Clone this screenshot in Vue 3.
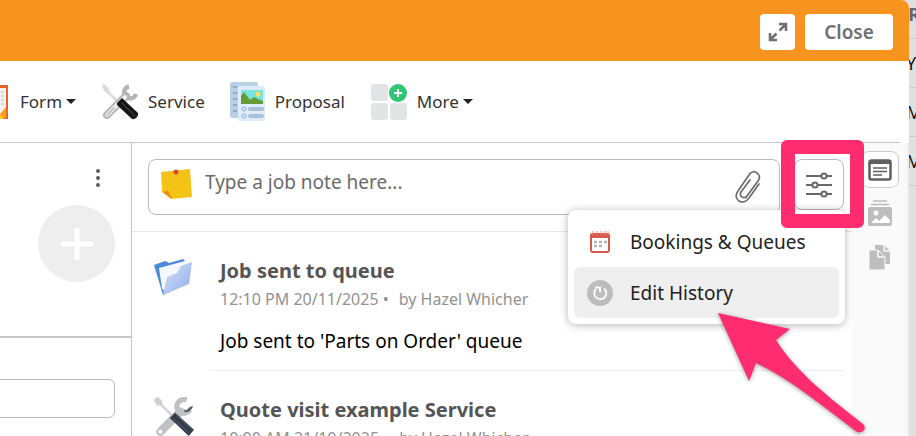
<template>
  <div class="page">
    <section class="dialog">
      <header class="dialog-header">
        <button class="header-btn expand" type="button" aria-label="Expand">
          <svg width="20" height="20" viewBox="0 0 20 20" fill="none" stroke="#707070" stroke-width="2.6">
            <path d="M11.500 8.500L17.500 2.500M11 2H18V9M8.500 11.500l-6 6M9 18H2V11" />
          </svg>
        </button>
        <button class="header-btn close" type="button">Close</button>
      </header>

      <nav class="toolbar">
        <button class="tool form-tool" type="button">
          <svg width="11" height="36" viewBox="0 0 11 36">
            <path d="M0 1h8v34H0z" fill="#e5622a" />
            <path d="M0 4h6v20l-6 7z" fill="#f2f2f2" />
            <path d="M1 8h3M1 12h3M1 16h3M1 20h3" stroke="#b9b9b9" />
            <path d="M6 23v11H0v-4z" fill="#f9a01b" />
            <path d="M0 30l4 5H0z" fill="#ffc928" />
          </svg>
          <span>Form<i class="caret"></i></span>
        </button>
        <button class="tool service-tool" type="button">
          <svg width="38" height="38" viewBox="0 0 38 38">
            <path d="M2 1l3 1 3 4 1 3 11 11-2 2L7 11 4 9 1 4z" fill="#dcdcdc" />
            <path d="M28 3.500A6 6 0 1 0 35 11" fill="none" stroke="#b4b4b4" stroke-width="4.500" />
            <path d="M25 13L6 32" stroke="#b4b4b4" stroke-width="8" stroke-linecap="round" />
            <path d="M24 14L6 32" stroke="#f0f0f0" stroke-width="4" stroke-linecap="round" />
            <path d="M13 25l-7 7" stroke="#c4c4c4" stroke-width="2" stroke-linecap="round" />
            <path d="M16 20l5-5 16 15c1 3-3 7-6 6L16 22z" fill="#161616" />
            <path d="M21 20l13 13" stroke="#4a4a4a" stroke-width="1" />
          </svg>
          <span>Service</span>
        </button>
        <button class="tool proposal-tool" type="button">
          <svg width="36" height="40" viewBox="0 0 36 40">
            <rect width="28" height="36" rx="2" fill="#b8d0e6" />
            <path d="M3 5h4M3 11h4M3 17h4M3 23h4M3 29h4" stroke="#91abc3" stroke-width="2" />
            <rect x="8" y="4" width="27" height="35" rx="2" fill="#dcecfb" />
            <rect x="11" y="8" width="22" height="14" fill="#78e3df" />
            <circle cx="28" cy="12" r="2.500" fill="#f6df63" />
            <path d="M11 22v-8l3-4 6 8 4-3 4 2 5 2v3z" fill="#679b36" />
            <circle cx="14" cy="27" r="2" fill="none" stroke="#91abc3" />
            <circle cx="14" cy="34" r="2" fill="none" stroke="#91abc3" />
            <path d="M20 27h12M20 34h12" stroke="#a8c1d7" stroke-width="4" stroke-linecap="round" />
          </svg>
          <span>Proposal</span>
        </button>
        <button class="tool more-tool" type="button">
          <svg width="38" height="38" viewBox="0 0 38 38">
            <g fill="#e3e4e6">
              <rect x="1" y="1" width="17" height="17" rx="3" />
              <rect x="1" y="20" width="17" height="17" rx="3" />
              <rect x="20" y="20" width="17" height="17" rx="3" />
            </g>
            <circle cx="28" cy="10" r="9" fill="#2fc574" />
            <path d="M28 6v8M24 10h8" stroke="#fff" stroke-width="2" />
          </svg>
          <span>More<i class="caret"></i></span>
        </button>
      </nav>

      <div class="workspace">
        <aside class="left-pane">
          <div class="contacts">
            <button class="kebab" type="button" aria-label="Options">
              <svg width="6" height="20" viewBox="0 0 6 20" fill="#5c5c5c">
                <circle cx="3" cy="3" r="2" />
                <circle cx="3" cy="10" r="2" />
                <circle cx="3" cy="17" r="2" />
              </svg>
            </button>
            <button class="add-btn" type="button" aria-label="Add">
              <svg width="32" height="32" viewBox="0 0 32 32">
                <path d="M16 2v28M2 16h28" stroke="#fff" stroke-width="5" stroke-linecap="round" />
              </svg>
            </button>
          </div>
          <input v-model="detail" class="detail-input" type="text" aria-label="Detail" />
        </aside>

        <main class="diary">
          <div class="note-bar">
            <div class="note-box">
              <svg width="34" height="32" viewBox="0 0 34 32">
                <path d="M1 3L30 0l2 28-21 2-9-7z" fill="#f5c315" />
                <path d="M3 23c2 0 4-1 5-2l4 9z" fill="#e98d12" />
                <circle cx="16" cy="3" r="2.500" fill="#dc4a35" />
              </svg>
              <input v-model="note" type="text" placeholder="Type a job note here..." aria-label="Job note" />
              <button class="attach" type="button" aria-label="Attach file">
                <svg width="26" height="34" viewBox="0 0 26 34" fill="none" stroke="#6c6c6c" stroke-width="1.700" stroke-linecap="round">
                  <path d="M24 14L14 28c-3 4-7 5-10 3s-4-6-1-10L14 5c2-4 6-4 8-2 3 2 3 5 1 8L12 26c-1 2-3 2-5 1s-2-3-1-5l9-12" />
                </svg>
              </button>
            </div>
            <div class="filter">
              <button class="filter-btn" type="button" aria-label="Filter">
                <svg width="28" height="26" viewBox="0 0 28 26" fill="#fff" stroke="#686868" stroke-width="2">
                  <path d="M1 4h26M1 13h26M1 22h26" />
                  <circle cx="19" cy="4" r="2.600" />
                  <circle cx="10" cy="13" r="2.600" />
                  <circle cx="19" cy="22" r="2.600" />
                </svg>
              </button>
              <div class="menu">
                <button class="menu-item" type="button">
                  <svg width="26" height="26" viewBox="0 0 26 26">
                    <rect x="4" y="5" width="18" height="18" rx="2" fill="#fff" stroke="#d9584d" stroke-width="2" />
                    <path d="M3 5h20v4H3z" fill="#d9584d" />
                    <path d="M6 2v4M10 2v4M14 2v4M18 2v4M21 2v4" stroke="#e58a82" />
                    <path d="M7 13h13M7 17h8" stroke="#b5b5b5" stroke-width="2.500" stroke-dasharray="3 2" />
                  </svg>
                  <span>Bookings &amp; Queues</span>
                </button>
                <button class="menu-item active" type="button">
                  <svg width="26" height="26" viewBox="0 0 26 26">
                    <circle cx="13" cy="13" r="13" fill="#bdbdbd" />
                    <path d="M17 8.500a6 6 0 1 1-8 0.500" fill="none" stroke="#fff" stroke-width="1.800" />
                    <path d="M8 7.500h5v5" fill="none" stroke="#fff" stroke-width="1.800" />
                  </svg>
                  <span>Edit History</span>
                </button>
              </div>
              <div class="highlight"></div>
              <svg class="arrow" width="156" height="130" viewBox="0 0 156 130">
                <path d="M4 4L76 20 62 31C82 63 117 90 149 115q3 3 1 6t-7 2C110 98 76 70 42 54L35 72z" fill="#ff2d6f" />
              </svg>
            </div>
          </div>

          <ul class="feed">
            <li v-for="entry in entries" :key="entry.title" class="entry">
              <svg v-if="entry.icon === 'folder'" width="40" height="40" viewBox="0 0 40 40">
                <defs>
                  <linearGradient id="folder-front" x1="0" y1="0" x2="1" y2="1">
                    <stop offset="0" stop-color="#d7e4fb" />
                    <stop offset="1" stop-color="#8eaae7" />
                  </linearGradient>
                </defs>
                <path d="M0 7l11-4 4 2 14-4 3 3-16 30-7 3z" fill="#4c8bdb" />
                <path d="M5 10L31 3l5 3-24 30-4-6z" fill="#f4f8ff" />
                <path d="M9 37L13 19l10-4 4-7 11-4-3 22z" fill="url(#folder-front)" />
              </svg>
              <svg v-else width="40" height="40" viewBox="0 0 38 38">
                <path d="M1 1l3-1 4 4v3l11 11-1 2L6 8H3L0 4z" fill="#cdd1da" />
                <path d="M31 3A6.500 6.500 0 1 0 34 12" fill="none" stroke="#bfc1c4" stroke-width="5" />
                <path d="M29 14.500c4 0 7-2 8-6l-3 1-3 3-4-1z" fill="#555b63" />
                <path d="M25 14L6 33" stroke="#bfc1c4" stroke-width="8" stroke-linecap="round" />
                <circle cx="6" cy="33" r="2" fill="#fff" />
                <path d="M15 20l5-5 18 16-5 6z" fill="#343d49" />
                <path d="M18 20l15 14M21 17l15 14" stroke="#4c5663" />
              </svg>
              <div class="entry-body">
                <h3>{{ entry.title }}</h3>
                <p class="meta">
                  <span>{{ entry.time }} •</span>
                  <span>by {{ entry.author }}</span>
                </p>
                <p class="text">{{ entry.text }}</p>
              </div>
            </li>
          </ul>
        </main>

        <aside class="side-tabs">
          <button class="side-tab active" type="button" aria-label="Diary">
            <svg width="24" height="22" viewBox="0 0 24 22">
              <rect x="1.500" y="1.500" width="21" height="19" rx="2" fill="#fff" stroke="#5f5f5f" stroke-width="2.500" />
              <path d="M1 2h22v3H1z" fill="#5f5f5f" />
              <path d="M5 9h14M5 12.500h14M5 16h9" stroke="#5f5f5f" stroke-width="1.500" />
            </svg>
          </button>
          <button class="side-tab" type="button" aria-label="Photos">
            <svg width="24" height="26" viewBox="0 0 24 26">
              <path d="M5 1h14M3 4.500h18" stroke="#bdbdbd" stroke-width="1.500" />
              <rect y="7" width="24" height="19" rx="2" fill="#bdbdbd" />
              <circle cx="8" cy="13" r="2.500" fill="#fff" />
              <path d="M3 23l5-5 3 3 6-6 5 5v3z" fill="#fff" />
            </svg>
          </button>
          <button class="side-tab" type="button" aria-label="Documents">
            <svg width="24" height="26" viewBox="0 0 24 26">
              <path d="M7 1h9l6 6v13H7z" fill="#bdbdbd" />
              <path d="M16 1v6h6" fill="none" stroke="#fafafa" stroke-width="1.500" />
              <path d="M1 6h9l7 7v13H1z" fill="#bdbdbd" stroke="#fafafa" />
              <path d="M10 6v7h7" fill="none" stroke="#fafafa" stroke-width="1.500" />
            </svg>
          </button>
        </aside>
      </div>
    </section>

    <div class="backdrop">
      <table>
        <thead>
          <tr><th>R</th></tr>
        </thead>
        <tbody>
          <tr v-for="(cell, i) in cells" :key="i"><td>{{ cell }}</td></tr>
        </tbody>
      </table>
    </div>
  </div>
</template>

<script setup>
import { ref } from 'vue'

const note = ref('')
const detail = ref('')

const cells = ['Y', 'M', 'M']

const entries = [
  {
    icon: 'folder',
    title: 'Job sent to queue',
    time: '12:10 PM 20/11/2025',
    author: 'Hazel Whicher',
    text: "Job sent to 'Parts on Order' queue"
  },
  {
    icon: 'tools',
    title: 'Quote visit example Service',
    time: '10:00 AM 21/10/2025',
    author: 'Hazel Whicher',
    text: ''
  }
]
</script>

<style>
body {
  margin: 0;
  overflow: hidden;
}
</style>

<style scoped>
.page {
  display: flex;
  height: 100vh;
  overflow: hidden;
  background: #e0e0e0;
  font-family: "Noto Sans", "Open Sans", sans-serif;
  color: #333;
}

.page *,
.page *::before {
  box-sizing: border-box;
}

button {
  padding: 0;
  border: 0;
  background: none;
  font: inherit;
  color: inherit;
  cursor: pointer;
}

svg {
  display: block;
  flex: none;
}

.dialog {
  display: flex;
  flex-direction: column;
  flex: 1;
  min-width: 0;
  background: #fff;
  border-top-right-radius: 8px;
}

.dialog-header {
  display: flex;
  flex: none;
  justify-content: flex-end;
  gap: 10px;
  height: 61px;
  padding: 14px 16px 11px;
  background: #f79420;
  border-top-right-radius: 8px;
}

.header-btn {
  display: flex;
  align-items: center;
  justify-content: center;
  background: #fff;
  border-radius: 4px;
  color: #707070;
  font-size: 19px;
  font-weight: 600;
}

.expand {
  width: 35px;
}

.close {
  width: 88px;
}

.toolbar {
  display: flex;
  flex: none;
  align-items: center;
  gap: 25px;
  height: 82px;
  margin-right: 9px;
  border-bottom: 1px solid #c6c6c6;
}

.tool {
  display: flex;
  align-items: center;
  gap: 9px;
  font-size: 17px;
}

.tool span {
  display: flex;
  align-items: center;
}

.caret {
  margin-left: 4px;
  border: 5px solid transparent;
  border-top-color: #222;
  border-bottom: 0;
}

.workspace {
  display: flex;
  flex: 1;
  min-height: 0;
}

.left-pane {
  flex: none;
  width: 132px;
  border-right: 1px solid #c6c6c6;
}

.contacts {
  display: flex;
  flex-direction: column;
  align-items: flex-end;
  gap: 17px;
  height: 195px;
  padding: 25px 16px 0;
  border-bottom: 2px solid #c8c8c8;
}

.kebab {
  margin-right: 14px;
}

.add-btn {
  display: flex;
  align-items: center;
  justify-content: center;
  width: 77px;
  height: 77px;
  background: #eee;
  border-radius: 50%;
}

.detail-input {
  width: 125px;
  height: 39px;
  margin: 41px 0 0 -10px;
  border: 1px solid #bbb;
  border-radius: 6px;
}

.diary {
  flex: 1;
  min-width: 0;
}

.note-bar {
  display: flex;
  align-items: flex-start;
  gap: 14px;
  height: 89px;
  padding: 16px 8px 0 16px;
  border-bottom: 1px solid #e6e6e6;
}

.note-box {
  display: flex;
  flex: 1;
  gap: 11px;
  height: 56px;
  min-width: 0;
  padding: 9px 18px 10px 11px;
  border: 1px solid #bbb;
  border-radius: 8px;
}

.note-box input {
  flex: 1;
  min-width: 0;
  height: 26px;
  padding: 0;
  border: 0;
  outline: none;
  font: inherit;
  font-size: 19px;
}

.note-box input::placeholder {
  color: #6b6b6b;
  opacity: 1;
}

.filter {
  position: relative;
}

.filter-btn {
  display: flex;
  align-items: center;
  justify-content: center;
  width: 50px;
  height: 51px;
  border: 1px solid #bbb;
  border-radius: 8px;
}

.menu {
  position: absolute;
  top: 51px;
  right: -1px;
  z-index: 1;
  width: 277px;
  padding: 6px;
  background: #fff;
  border-radius: 8px;
  box-shadow: 0 1px 8px rgba(0, 0, 0, 0.3);
}

.menu-item {
  display: flex;
  align-items: center;
  gap: 17px;
  width: 100%;
  height: 51px;
  padding: 0 13px;
  border-radius: 6px;
  color: #222;
  font-size: 19px;
  white-space: nowrap;
}

.menu-item.active {
  background: #efefef;
}

.highlight {
  position: absolute;
  top: -19px;
  left: -13px;
  z-index: 2;
  width: 83px;
  height: 88px;
  border: 14px solid #ff2d6f;
  border-radius: 6px;
}

.arrow {
  position: absolute;
  top: 150px;
  right: -26px;
  z-index: 2;
  filter: drop-shadow(0 1px 2px rgba(0, 0, 0, 0.4));
}

.feed {
  margin: 0;
  padding: 0 8px 0 22px;
  list-style: none;
}

.entry {
  display: flex;
  align-items: flex-start;
  gap: 17px;
}

.entry > svg {
  margin-top: 26px;
}

.entry-body {
  flex: 1;
  min-width: 0;
  height: 139px;
  padding: 24px 9px 0;
  border-bottom: 1px solid #eee;
}

.entry h3 {
  margin: 0;
  color: #555;
  font-size: 20px;
  font-weight: 700;
  line-height: 30px;
}

.entry p {
  margin: 0;
}

.meta {
  display: flex;
  gap: 10px;
  color: #929292;
  font-size: 16px;
  line-height: 26px;
}

.entry .text {
  margin-top: 16px;
  color: #000;
  font-size: 19px;
  line-height: 26px;
}

.side-tabs {
  display: flex;
  flex: none;
  flex-direction: column;
  align-items: center;
  gap: 12px;
  width: 57px;
  padding-top: 8px;
  background: #fafafa;
  border-right: 2px solid #f0f0f0;
}

.side-tab.active {
  display: flex;
  align-items: center;
  justify-content: center;
  width: 38px;
  height: 37px;
  background: #fff;
  border: 1px solid #ccc;
  border-radius: 8px;
}

.side-tab + .side-tab + .side-tab {
  margin-top: 6px;
}

.backdrop {
  flex: none;
  width: 7px;
  overflow: hidden;
}

.backdrop table {
  margin-left: -3px;
  border-collapse: collapse;
  color: #111;
  font-size: 18px;
}

.backdrop th,
.backdrop td {
  height: 49px;
  padding: 0;
  border-bottom: 1px solid #cfcfcf;
}

.backdrop th {
  height: 38px;
  padding-bottom: 10px;
  color: #666;
}
</style>
